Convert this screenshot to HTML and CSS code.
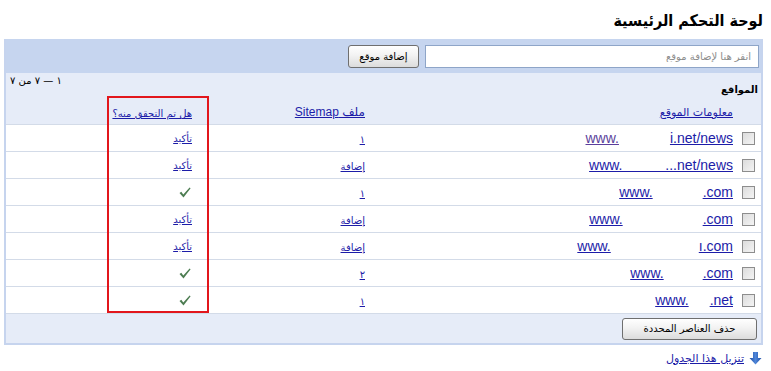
FILE: index.html
```html
<!DOCTYPE html>
<html lang="ar" dir="rtl">
<head>
<meta charset="utf-8">
<title>لوحة التحكم الرئيسية</title>
<link rel="stylesheet" href="styles.css">
</head>
<body>
<div class="page">
  <h1 class="title">لوحة التحكم الرئيسية</h1>
  <div class="panel">
    <div class="addbar">
      <input class="addinput" type="text" placeholder="انقر هنا لإضافة موقع">
      <button class="btn btn-add">إضافة موقع</button>
    </div>
    <div class="head">
      <div class="headtop">
        <span class="sites">المواقع</span>
        <span class="pager">١ — ٧ من ٧</span>
      </div>
      <div class="grid hdr">
        <div></div>
        <div class="c-site"><a href="#" class="ar">معلومات الموقع</a></div>
        <div class="c-map"><a href="#" class="mix">ملف Sitemap</a></div>
        <div class="c-ver"><a href="#" class="ar">هل تم التحقق منه؟</a></div>
        <div></div>
      </div>
    </div>
    <div class="rows">
      <div class="grid row">
        <div class="c-chk"><span class="chk"></span></div>
        <div class="c-site"><span class="url" dir="ltr"><a href="#" class="visited">www.</a><span class="gap g1"></span><a href="#">i.net/news</a></span></div>
        <div class="c-map"><a href="#" class="ar">١</a></div>
        <div class="c-ver"><a href="#" class="ar">تأكيد</a></div>
        <div></div>
      </div>
      <div class="grid row">
        <div class="c-chk"><span class="chk"></span></div>
        <div class="c-site"><span class="url" dir="ltr"><a href="#">www.&nbsp;&nbsp;&nbsp;&nbsp;&nbsp;&nbsp;&nbsp;&nbsp;&nbsp;&nbsp;&nbsp;...net/news</a></span></div>
        <div class="c-map"><a href="#" class="ar">إضافة</a></div>
        <div class="c-ver"><a href="#" class="ar">تأكيد</a></div>
        <div></div>
      </div>
      <div class="grid row">
        <div class="c-chk"><span class="chk"></span></div>
        <div class="c-site"><span class="url" dir="ltr"><a href="#">www.</a><span class="gap g3"></span><a href="#">.com</a></span></div>
        <div class="c-map"><a href="#" class="ar">١</a></div>
        <div class="c-ver"><svg class="tick" width="12" height="11" viewBox="0 0 12 11"><path d="M0.5 6 L2.3 4.8 L4.3 7.4 L10.6 0.4 L11.6 1.3 L4.5 10.4 Z" fill="#4d7d52"/></svg></div>
        <div></div>
      </div>
      <div class="grid row">
        <div class="c-chk"><span class="chk"></span></div>
        <div class="c-site"><span class="url" dir="ltr"><a href="#">www.</a><span class="gap g4"></span><a href="#">.com</a></span></div>
        <div class="c-map"><a href="#" class="ar">إضافة</a></div>
        <div class="c-ver"><a href="#" class="ar">تأكيد</a></div>
        <div></div>
      </div>
      <div class="grid row">
        <div class="c-chk"><span class="chk"></span></div>
        <div class="c-site"><span class="url" dir="ltr"><a href="#">www.</a><span class="gap g5"></span><a href="#">ı.com</a></span></div>
        <div class="c-map"><a href="#" class="ar">إضافة</a></div>
        <div class="c-ver"><a href="#" class="ar">تأكيد</a></div>
        <div></div>
      </div>
      <div class="grid row">
        <div class="c-chk"><span class="chk"></span></div>
        <div class="c-site"><span class="url" dir="ltr"><a href="#">www.</a><span class="gap g6"></span><a href="#">.com</a></span></div>
        <div class="c-map"><a href="#" class="ar">٢</a></div>
        <div class="c-ver"><svg class="tick" width="12" height="11" viewBox="0 0 12 11"><path d="M0.5 6 L2.3 4.8 L4.3 7.4 L10.6 0.4 L11.6 1.3 L4.5 10.4 Z" fill="#4d7d52"/></svg></div>
        <div></div>
      </div>
      <div class="grid row">
        <div class="c-chk"><span class="chk"></span></div>
        <div class="c-site"><span class="url" dir="ltr"><a href="#">www.</a><span class="gap g7"></span><a href="#">.net</a></span></div>
        <div class="c-map"><a href="#" class="ar">١</a></div>
        <div class="c-ver"><svg class="tick" width="12" height="11" viewBox="0 0 12 11"><path d="M0.5 6 L2.3 4.8 L4.3 7.4 L10.6 0.4 L11.6 1.3 L4.5 10.4 Z" fill="#4d7d52"/></svg></div>
        <div></div>
      </div>
    </div>
    <div class="foot">
      <button class="btn btn-del">حذف العناصر المحددة</button>
    </div>
  </div>
  <div class="download">
    <svg class="dl-icon" width="13" height="13" viewBox="0 0 13 13"><defs><linearGradient id="dlg" x1="0" y1="0" x2="1" y2="0"><stop offset="0" stop-color="#1d4fa8"/><stop offset="0.5" stop-color="#4f86d8"/><stop offset="1" stop-color="#1d4fa8"/></linearGradient></defs><path d="M4 0 H9 V6 H12.5 L6.5 12.5 L0.5 6 H4 Z" fill="url(#dlg)"/></svg>
    <a href="#" class="ar">تنزيل هذا الجدول</a>
  </div>
  <div class="mark"></div>
</div>
</body>
</html>
```
FILE: styles.css
```css
html, body {
  margin: 0;
  padding: 0;
  background: #ffffff;
}
body {
  font-family: "Liberation Sans", "DejaVu Sans", sans-serif;
  font-size: 13px;
  color: #000;
}
.page {
  position: relative;
  width: 771px;
}
a {
  color: #1c1ca8;
}
a.visited {
  color: #5b3f9c;
}
.ar {
  font-family: "DejaVu Sans", sans-serif;
  font-size: 10px;
}
.mix {
  font-family: "DejaVu Sans", sans-serif;
  font-size: 10px;
}
.title {
  margin: 0;
  height: 39px;
  box-sizing: border-box;
  padding: 9px 8px 0 0;
  font-family: "DejaVu Sans Condensed", "DejaVu Sans", sans-serif;
  font-stretch: condensed;
  font-size: 16px;
  line-height: 24px;
  font-weight: bold;
}
.panel {
  margin: 0 8px 0 4px;
  border: 2px solid #c6d4ee;
  border-top-width: 0;
}
.addbar {
  height: 34px;
  box-sizing: border-box;
  background: #c6d5ef;
  display: flex;
  align-items: center;
  gap: 6px;
  padding: 0 2px 0 0;
}
.addinput {
  width: 334px;
  height: 23px;
  box-sizing: border-box;
  border: 1px solid #8ea5c8;
  background: #fff;
  font-family: "DejaVu Sans", sans-serif;
  font-size: 10px;
  padding: 0 7px;
  margin: 0;
  outline: none;
}
.addinput::placeholder {
  color: #8d8d8d;
}
.btn {
  font-family: "DejaVu Sans", sans-serif;
  font-size: 10px;
  color: #000;
  border: 1px solid #6f6f6f;
  border-radius: 3px;
  background: linear-gradient(#ffffff, #f2f2f2 45%, #dcdcdc);
  margin: 0;
  padding: 0 6px;
}
.btn-add {
  width: 71px;
  height: 23px;
}
.head {
  height: 51px;
  background: #e6ecf8;
  display: flex;
  flex-direction: column;
}
.headtop {
  height: 28px;
  display: flex;
  justify-content: space-between;
  align-items: flex-start;
}
.sites {
  font-family: "DejaVu Sans", sans-serif;
  font-size: 10px;
  font-weight: bold;
  padding: 11px 3px 0 0;
}
.pager {
  font-family: "DejaVu Sans", sans-serif;
  font-size: 10px;
  padding: 2px 0 0 0;
  margin-left: 4px;
}
.grid {
  display: grid;
  grid-template-columns: 27px 366px 173px 88px 1fr;
  align-items: center;
}
.hdr {
  height: 23px;
  align-items: end;
  padding-bottom: 5px;
  box-sizing: border-box;
}
.c-site {
  padding-right: 1px;
  text-align: right;
}
.c-map {
  padding-right: 3px;
  text-align: right;
}
.c-ver {
  padding-right: 3px;
  text-align: right;
  display: flex;
  justify-content: flex-start;
}
.hdr .c-map .mix {
  font-size: 12px;
  font-family: "Liberation Sans", "DejaVu Sans", sans-serif;
}
.hdr .c-site .ar {
  font-size: 11px;
}
.row {
  height: 27px;
  box-sizing: border-box;
  border-top: 1px solid #d3dbe8;
  background: #fff;
}
.c-chk {
  display: flex;
  justify-content: flex-start;
  padding-right: 6px;
}
.chk {
  display: block;
  width: 11px;
  height: 11px;
  border: 1px solid #8d8d8d;
  background: linear-gradient(135deg, #dcdcdc, #f4f4f4);
}
.url {
  display: inline-flex;
  font-size: 14px;
  font-family: "Liberation Sans", sans-serif;
}
.gap {
  display: inline-block;
}
.g1 { width: 51px; }
.g3 { width: 50px; }
.g4 { width: 80px; }
.g5 { width: 88px; }
.g6 { width: 39px; }
.g7 { width: 21px; }
.tick {
  display: block;
  margin-right: 1px;
}
.foot {
  height: 30px;
  box-sizing: border-box;
  border-top: 1px solid #d3dbe8;
  background: #e6ecf8;
  display: flex;
  align-items: center;
  padding-right: 4px;
}
.btn-del {
  width: 135px;
  height: 22px;
}
.download {
  display: flex;
  align-items: center;
  gap: 5px;
  padding: 4px 9px 0 0;
  height: 18px;
}
.dl-icon {
  display: block;
}
.download .ar {
  font-size: 11px;
}
.mark {
  position: absolute;
  left: 107px;
  top: 96px;
  width: 102px;
  height: 217px;
  box-sizing: border-box;
  border: 2px solid #e2161c;
}
```
